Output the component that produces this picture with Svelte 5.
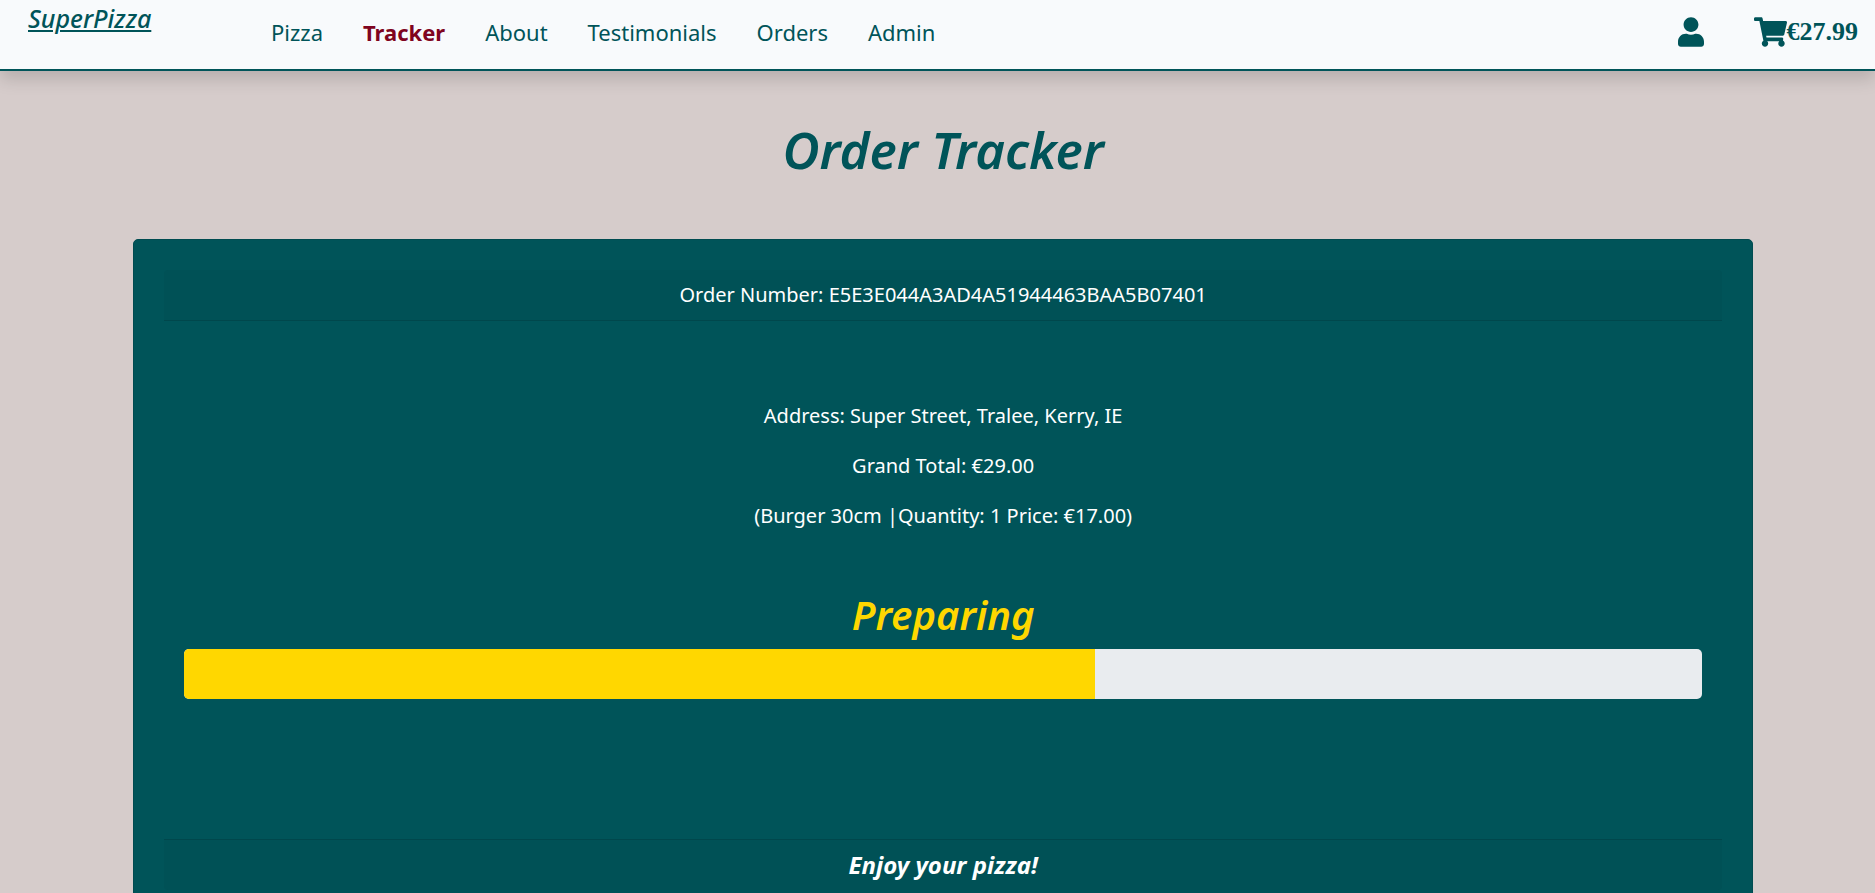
<script>
  const links = ['Pizza', 'Tracker', 'About', 'Testimonials', 'Orders', 'Admin'];
  const current = 'Tracker';
  const progress = 60;
  const details = [
    'Address: Super Street, Tralee, Kerry, IE',
    'Grand Total: €29.00',
    '(Burger 30cm |Quantity: 1 Price: €17.00)'
  ];
</script>

<header class="topbar">
  <a class="brand" href="#home">SuperPizza</a>
  <nav aria-label="Main">
    {#each links as link}
      <a href={'#' + link.toLowerCase()} class:active={link === current}>{link}</a>
    {/each}
  </nav>
  <div class="tools">
    <a class="account" href="#account" aria-label="Account">
      <svg width="26" height="30" viewBox="0 0 448 512" aria-hidden="true">
        <path fill="currentColor" d="M224 256c70.700 0 128-57.300 128-128S294.700 0 224 0 96 57.300 96 128s57.300 128 128 128zm89.600 32h-16.700c-22.200 10.200-46.900 16-72.900 16s-50.600-5.800-72.900-16h-16.700C60.200 288 0 348.200 0 422.400V464c0 26.500 21.500 48 48 48h352c26.500 0 48-21.500 48-48v-41.600c0-74.200-60.200-134.400-134.400-134.400z" />
      </svg>
    </a>
    <a class="cart" href="#cart">
      <svg width="33" height="30" viewBox="0 0 576 512" aria-hidden="true">
        <path fill="currentColor" d="M528.120 301.319l47.273-208C578.806 78.301 567.391 64 551.990 64H159.208l-9.166-44.810C147.758 8.021 137.930 0 126.529 0H24C10.745 0 0 10.745 0 24v16c0 13.255 10.745 24 24 24h69.883l70.248 343.435C147.325 417.100 136 435.222 136 456c0 30.928 25.072 56 56 56s56-25.072 56-56c0-15.674-6.447-29.835-16.824-40h209.647C430.447 426.165 424 440.326 424 456c0 30.928 25.072 56 56 56s56-25.072 56-56c0-22.172-12.888-41.332-31.579-50.405l5.517-24.276c3.413-15.018-8.002-29.319-23.403-29.319H218.117l-6.545-32h293.145c11.206 0 20.920-7.754 23.403-18.681z" />
      </svg>
      <span>€27.99</span>
    </a>
  </div>
</header>

<main>
  <h1>Order Tracker</h1>
  <section class="card">
    <div class="strip top">Order Number: E5E3E044A3AD4A51944463BAA5B07401</div>
    <div class="body">
      {#each details as line}
        <p>{line}</p>
      {/each}
      <h2>Preparing</h2>
      <div class="progress" role="progressbar" aria-label="Preparing" aria-valuemin="0" aria-valuemax="100" aria-valuenow={progress}>
        <div class="fill" style="width: {progress}%"></div>
      </div>
    </div>
    <div class="strip bottom">Enjoy your pizza!</div>
  </section>
</main>

<style>
  :global(body) {
    background: #d6cccb;
    color: #005459;
    font-family: "Noto Sans", sans-serif;
    overflow-x: hidden;
  }
  :global(html) {
    scrollbar-width: none;
  }
  * {
    box-sizing: border-box;
  }
  a {
    color: inherit;
    text-decoration: none;
  }
  .topbar {
    display: flex;
    align-items: center;
    min-height: 71px;
    padding: 0 17px 5px 28px;
    background: #f8fafc;
    border-bottom: 2px solid #005459;
    box-shadow: 0 8px 16px rgba(0, 0, 0, 0.15);
  }
  .brand, h1, h2, .bottom {
    font-family: "Merienda One", "Noto Sans", sans-serif;
    font-style: italic;
    font-weight: 600;
  }
  .brand {
    align-self: flex-start;
    width: 243px;
    font-size: 25px;
    line-height: 36px;
    font-weight: 500;
    text-decoration: underline;
    text-decoration-thickness: 2px;
    text-underline-offset: 2px;
  }
  nav {
    display: flex;
    gap: 40px;
    font-size: 22px;
    font-weight: 400;
    line-height: 32px;
  }
  .active {
    color: #7f0420;
    font-weight: 700;
  }
  .tools {
    display: flex;
    align-items: center;
    gap: 50px;
    margin-left: auto;
  }
  svg {
    display: block;
  }
  .cart {
    display: flex;
    align-items: center;
    font: 700 26px/30px "Liberation Serif", serif;
  }
  main {
    padding: 46px 6.5% 0 7.1%;
    text-align: center;
  }
  h1 {
    margin: 0 0 58px;
    font-size: 51px;
    line-height: 64px;
  }
  .card {
    padding: 30px;
    background: #005459;
    border: 1px solid #004b50;
    border-radius: 5px;
    color: #fff;
    font-size: 20px;
    line-height: 30px;
  }
  .strip {
    padding: 10px 20px;
    background: #005156;
  }
  .top {
    border-bottom: 1px solid #00474c;
    border-radius: 4px 4px 0 0;
  }
  .bottom {
    border-top: 1px solid #00474c;
    border-radius: 0 0 4px 4px;
    padding: 11px 20px;
    font-size: 24px;
    line-height: 28px;
    font-weight: 700;
  }
  .body {
    padding: 80px 20px 140px;
  }
  p {
    margin: 0 0 20px;
  }
  h2 {
    margin: 60px 0 10px;
    color: #ffd700;
    font-size: 40px;
    line-height: 48px;
  }
  .progress {
    height: 50px;
    overflow: hidden;
    background: #e9ecef;
    border-radius: 5px;
  }
  .fill {
    height: 100%;
    background: #ffd700;
  }
</style>
